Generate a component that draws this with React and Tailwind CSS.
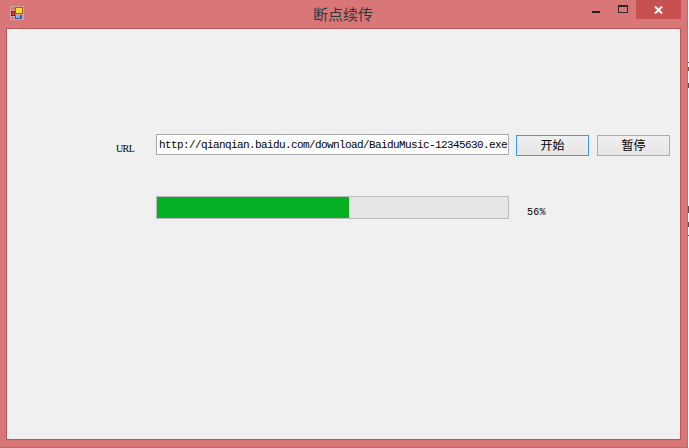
function AppIcon() {
  return (
    <svg width="14" height="14" viewBox="0 0 14 14" className="shrink-0" shapeRendering="crispEdges">
      <rect x="0" y="0" width="14" height="14" fill="#d2a3a5" />
      <rect x="1" y="1" width="4" height="3" fill="#dc7677" />
      <rect x="1" y="11" width="3" height="2" fill="#dc7677" />
      <rect x="5" y="1" width="8" height="7" fill="#8a6a10" />
      <rect x="6" y="2" width="6" height="5" fill="#fdd835" />
      <rect x="1" y="5" width="4" height="5" fill="#8e1010" />
      <rect x="2" y="6" width="2" height="3" fill="#e04a3a" />
      <rect x="5" y="9" width="7" height="4" fill="#2a5db0" />
      <rect x="6" y="9" width="4" height="3" fill="#7fb0f0" />
    </svg>
  );
}

export default function App() {
  return (
    <div className="w-[689px] h-[448px] bg-white flex overflow-hidden">
      <div className="w-[688px] h-[448px] flex flex-col bg-[#d97778] border-r border-b border-[#b96a6c]">
        <div className="h-[28px] shrink-0 flex items-start relative">
          <div className="pl-[10px] pt-[6px]"><AppIcon /></div>
          <div className="absolute left-[313px] top-[4px] text-[15px] leading-[20px] text-[#33363c] font-['Noto_Sans_CJK_SC',sans-serif]">断点续传</div>
          <div className="ml-auto flex items-start pr-[6px]">
            <div className="w-[28px] h-[19px] flex justify-center">
              <div className="w-[8px] h-[2px] bg-[#222] mt-[11px]"></div>
            </div>
            <div className="w-[26px] h-[19px] flex justify-center">
              <div className="w-[10px] h-[8px] border border-t-2 border-[#2b2b2b] mt-[5px]"></div>
            </div>
            <div className="w-[45px] h-[19px] bg-[#c75050] flex items-center justify-center">
              <svg width="9" height="8" viewBox="0 0 9 8"><path d="M1 0.5 L8 7.5 M8 0.5 L1 7.5" stroke="#fff" strokeWidth="2" /></svg>
            </div>
          </div>
        </div>
        <div className="ml-[6px] w-[675px] h-[412px] bg-[#f0f0f0] border border-[#b5595c] flex flex-col pt-[105px]">
          <div className="flex items-start">
            <div className="ml-[109px] w-[40px] mt-[8px] text-[10px] leading-[14px] tracking-[-0.6px] text-black font-['Liberation_Serif',serif]">URL</div>
            <div className="w-[353px] h-[21px] bg-white border border-[#ababab] pl-[2px] pt-[1px] flex items-center overflow-hidden text-[11px] tracking-[-0.6px] text-black whitespace-nowrap font-['Liberation_Mono',monospace]">http://qianqian.baidu.com/download/BaiduMusic-12345630.exe</div>
            <button className="ml-[7px] mt-[1px] w-[73px] h-[21px] border border-[#3399ff] pb-[2px] bg-gradient-to-b from-[#f0f0f0] to-[#e5e5e5] text-[12px] leading-[16px] text-black font-['Noto_Sans_CJK_SC',sans-serif]">开始</button>
            <button className="ml-[8px] mt-[1px] w-[73px] h-[21px] border border-[#acacac] pb-[2px] bg-gradient-to-b from-[#f0f0f0] to-[#e5e5e5] text-[12px] leading-[16px] text-black font-['Noto_Sans_CJK_SC',sans-serif]">暂停</button>
          </div>
          <div className="flex items-start mt-[40px] ml-[149px]">
            <div className="w-[353px] h-[23px] bg-[#e6e6e6] border border-[#bcbcbc] flex">
              <div className="w-[192px] h-full bg-[#06b025]"></div>
            </div>
            <div className="ml-[18px] mt-[10px] text-[10px] leading-[14px] tracking-[0.3px] text-black font-['Liberation_Mono',monospace]">56%</div>
          </div>
        </div>
      </div>
      <div className="w-px flex flex-col">
        <div className="h-px mt-[62px] bg-[#555]"></div>
        <div className="h-[4px] mt-[4px] bg-[#7a5a40]"></div>
        <div className="h-[5px] mt-[12px] bg-[#555]"></div>
        <div className="h-[7px] mt-[118px] bg-[#555]"></div>
        <div className="h-[5px] mt-[9px] bg-[#555]"></div>
        <div className="h-px mt-[8px] bg-[#555]"></div>
      </div>
    </div>
  );
}
